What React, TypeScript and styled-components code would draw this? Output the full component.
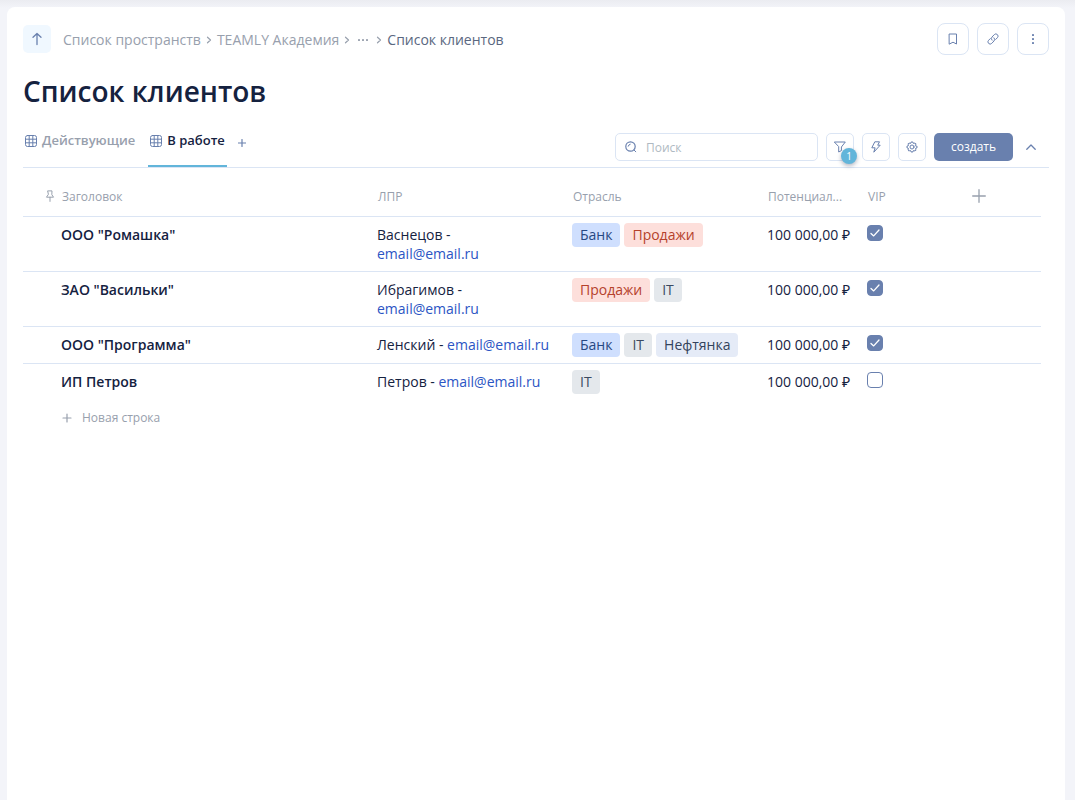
import React from "react";
import styled, { createGlobalStyle } from "styled-components";

const c = {
  ink: "#15223f",
  muted: "#98a0ad",
  accent: "#6980ae",
  sky: "#62b5da",
  line: "#dbe5f4",
  link: "#2b55c4",
};

const GlobalStyle = createGlobalStyle`
  *, *::before, *::after { box-sizing: border-box; }
  body {
    margin: 0;
    background: #f3f4f9;
    color: ${c.ink};
    font: 14px/19px "Open Sans", "Noto Sans", sans-serif;
  }
  button, input { font: inherit; color: inherit; }
  button { padding: 0; border: 0; background: none; cursor: pointer; }
  a { color: inherit; text-decoration: none; }
  svg { display: block; flex: none; }
`;

const Page = styled.div`
  display: flex;
  min-height: 100vh;
  padding: 7px 10px 0 7px;
  background: linear-gradient(#ebecf1, #f3f4f9 8px);
`;

const Panel = styled.main`
  flex: 1;
  min-width: 0;
  padding: 16px;
  background: #fff;
  border-radius: 8px 8px 0 0;
`;

const TopBar = styled.header`
  display: flex;
  align-items: center;
  gap: 12px;
  height: 32px;
`;

const BackLink = styled.a`
  display: grid;
  place-items: center;
  width: 28px;
  height: 28px;
  border-radius: 5px;
  background: #f0f8ff;
  color: ${c.accent};
`;

const Crumbs = styled.nav`
  display: flex;
  align-items: center;
  gap: 5px;
  flex: 1;
  color: ${c.muted};
  svg { margin-top: 2px; }
`;

const Current = styled.span`
  color: #5a6780;
`;

const More = styled.button`
  display: grid;
  place-items: center;
  width: 16px;
  height: 16px;
`;

const Actions = styled.div`
  display: flex;
  gap: 8px;
`;

const IconButton = styled.button<{ $size: number }>`
  position: relative;
  display: grid;
  place-items: center;
  flex: none;
  width: ${(p) => p.$size}px;
  height: ${(p) => p.$size}px;
  border: 1px solid ${c.line};
  border-radius: ${(p) => (p.$size > 30 ? 8 : 5)}px;
  background: #fff;
  color: ${c.accent};
`;

const Badge = styled.span`
  position: absolute;
  right: -4px;
  bottom: -4px;
  width: 16px;
  height: 16px;
  border-radius: 50%;
  background: ${c.sky};
  box-shadow: 0 2px 4px rgba(40, 50, 80, 0.35);
  color: #fff;
  font-size: 10px;
  line-height: 16px;
  text-align: center;
`;

const Title = styled.h1`
  margin: 16px 0 0;
  font-size: 28px;
  line-height: 40px;
  font-weight: 600;
`;

const Toolbar = styled.div`
  display: flex;
  align-items: flex-start;
  justify-content: space-between;
  height: 57px;
  border-bottom: 1px solid ${c.line};
`;

const Tabs = styled.div`
  display: flex;
  align-self: stretch;
  gap: 11px;
`;

const Tab = styled.button<{ $active?: boolean }>`
  display: flex;
  align-items: center;
  gap: 5px;
  padding: 5px 2px 0;
  border-bottom: 2px solid ${(p) => (p.$active ? c.sky : "transparent")};
  color: ${(p) => (p.$active ? c.ink : c.muted)};
  font-size: 13px;
  font-weight: 600;
  svg { color: ${c.accent}; }
`;

const AddTab = styled.button`
  display: grid;
  place-items: center;
  padding-top: 8px;
  color: ${c.accent};
`;

const Tools = styled.div`
  display: flex;
  align-items: center;
  gap: 8px;
  padding: 22px 8px 0 0;
`;

const Search = styled.label`
  display: flex;
  align-items: center;
  gap: 8px;
  width: 203px;
  height: 28px;
  padding: 0 8px;
  border: 1px solid ${c.line};
  border-radius: 5px;
  color: ${c.accent};
`;

const SearchInput = styled.input`
  flex: 1;
  min-width: 0;
  padding: 0;
  border: 0;
  outline: 0;
  background: none;
  font-size: 12px;
  &::placeholder { color: #afb9c2; opacity: 1; }
`;

const Create = styled.button`
  width: 79px;
  height: 28px;
  padding-bottom: 2px;
  border-radius: 5px;
  background: ${c.accent};
  color: #fff;
  font-size: 12px;
  font-weight: 500;
`;

const Collapse = styled.button`
  display: grid;
  place-items: center;
  width: 20px;
  height: 28px;
  color: ${c.accent};
`;

const TableWrap = styled.div`
  padding-right: 8px;
`;

const Table = styled.table`
  width: 100%;
  border-spacing: 0;
  table-layout: fixed;
`;

const HeadCell = styled.th`
  height: 49px;
  padding: 8px 8px 0 9px;
  border-bottom: 1px solid ${c.line};
  color: ${c.muted};
  font-size: 12px;
  font-weight: 400;
  text-align: left;
  white-space: nowrap;
`;

const NameHead = styled.span`
  display: flex;
  align-items: center;
  gap: 6px;
  padding-left: 12px;
`;

const AddColumn = styled.button`
  display: block;
  width: 14px;
  margin-left: 44px;
  color: ${c.muted};
`;

const Row = styled.tr`
  &:not(:last-child) td { border-bottom: 1px solid ${c.line}; }
`;

const Cell = styled.td`
  padding: 8px;
  vertical-align: top;
`;

const NameCell = styled(Cell)`
  padding-left: 38px;
  font-weight: 600;
`;

const TagCell = styled(Cell)`
  padding: 6px 8px;
`;

const Tags = styled.div`
  display: flex;
  gap: 4px;
`;

const tones = {
  blue: ["#cfdffe", "#274882"],
  red: ["#fddfdb", "#b5412b"],
  gray: ["#e4e8ec", "#3b4a61"],
  pale: ["#e5ebf7", "#33435c"],
};

const Tag = styled.span<{ $tone: keyof typeof tones }>`
  padding: 0 8px;
  border-radius: 4px;
  line-height: 24px;
  background: ${(p) => tones[p.$tone][0]};
  color: ${(p) => tones[p.$tone][1]};
`;

const Mail = styled.a`
  color: ${c.link};
`;

const Check = styled.input`
  display: block;
  appearance: none;
  width: 16px;
  height: 16px;
  margin: 0;
  border: 1px solid ${c.accent};
  border-radius: 4px;
  background: #fff;
`;

const CheckBox = styled.label`
  display: grid;
  width: 16px;
  > * { grid-area: 1 / 1; }
  svg { display: none; color: #fff; z-index: 1; pointer-events: none; }
  input:checked { background: ${c.accent}; }
  input:checked + svg { display: block; }
`;

const NewRow = styled.button`
  display: flex;
  align-items: center;
  gap: 10px;
  margin: 8px 0 0 39px;
  color: ${c.muted};
  font-size: 12px;
`;

type IconProps = { w: number; h?: number; d: string; sw?: number };
const Icon = ({ w, h = w, d, sw = 1 }: IconProps) => (
  <svg width={w} height={h} viewBox={`0 0 ${w} ${h}`} fill="none" stroke="currentColor"
    strokeWidth={sw} strokeLinecap="round" strokeLinejoin="round" aria-hidden="true">
    <path d={d} />
  </svg>
);

const GridIcon = () => (
  <Icon w={12} d="M2.5.5h7a2 2 0 0 1 2 2v7a2 2 0 0 1-2 2h-7a2 2 0 0 1-2-2v-7a2 2 0 0 1 2-2zM4.2.5v11M7.8.5v11M.5 4.2h11M.5 7.8h11" />
);
const Chevron = () => <Icon w={6} h={8} sw={1.2} d="M1.5 1.2 4.5 4 1.5 6.8" />;
const Dots = ({ vertical }: { vertical?: boolean }) => (
  <svg width="12" height="12" viewBox="0 0 12 12" fill="currentColor" aria-hidden="true">
    {[1, 5, 9].map((p) => (
      <rect key={p} x={vertical ? 5 : p} y={vertical ? p : 5} width="2" height="2" rx=".4" />
    ))}
  </svg>
);

const gearTeeth = Array.from({ length: 8 }, (_, i) => {
  const at = (r: number, deg: number) => {
    const a = ((i * 45 + deg) * Math.PI) / 180;
    return `${(6 + r * Math.cos(a)).toFixed(2)} ${(6 + r * Math.sin(a)).toFixed(2)}`;
  };
  return `${at(4.1, -14)}L${at(5.1, -9)}L${at(5.1, 9)}L${at(4.1, 14)}`;
});
const gear = `M${gearTeeth.join("L")}ZM8 6a2 2 0 1 1-4 0 2 2 0 0 1 4 0z`;

type TagData = [string, keyof typeof tones];
const bank: TagData = ["Банк", "blue"];
const sales: TagData = ["Продажи", "red"];
const it: TagData = ["IT", "gray"];
const oil: TagData = ["Нефтянка", "pale"];

const clients = [
  { name: 'ООО "Ромашка"', person: "Васнецов", tags: [bank, sales], vip: true },
  { name: 'ЗАО "Васильки"', person: "Ибрагимов", tags: [sales, it], vip: true },
  { name: 'ООО "Программа"', person: "Ленский", tags: [bank, it, oil], vip: true },
  { name: "ИП Петров", person: "Петров", tags: [it], vip: false },
];

export default function App() {
  return (
    <Page>
      <GlobalStyle />
      <Panel>
        <TopBar>
          <BackLink href="#" aria-label="Наверх">
            <Icon w={12} h={14} sw={1.3} d="M6 12.5V1.5M2 5.3 6 1.5l4 3.8" />
          </BackLink>
          <Crumbs>
            <a href="#">Список пространств</a>
            <Chevron />
            <a href="#">TEAMLY Академия</a>
            <Chevron />
            <More aria-label="Ещё"><Dots /></More>
            <Chevron />
            <Current>Список клиентов</Current>
          </Crumbs>
          <Actions>
            <IconButton $size={32} aria-label="В закладки">
              <Icon w={10} h={12} d="M1.5 1h7v10L5 9.2 1.5 11z" />
            </IconButton>
            <IconButton $size={32} aria-label="Ссылка">
              <Icon w={12} d="M5 7.2a2.3 2.3 0 0 1 0-3.2L7.3 1.6a2.1 2.1 0 0 1 3.1 3.1L8.7 6.4M7 4.8a2.3 2.3 0 0 1 0 3.2l-2.3 2.4a2.1 2.1 0 0 1-3.1-3.1l1.7-1.7" />
            </IconButton>
            <IconButton $size={32} aria-label="Меню"><Dots vertical /></IconButton>
          </Actions>
        </TopBar>
        <Title>Список клиентов</Title>
        <Toolbar>
          <Tabs>
            <Tab><GridIcon />Действующие</Tab>
            <Tab $active><GridIcon />В работе</Tab>
            <AddTab aria-label="Добавить вид"><Icon w={8} sw={1.2} d="M4 .5v7M.5 4h7" /></AddTab>
          </Tabs>
          <Tools>
            <Search>
              <svg width="14" height="14" viewBox="0 0 14 14" fill="none" stroke="currentColor" strokeLinecap="round" aria-hidden="true">
                <circle cx="6.5" cy="6.5" r="4.7" strokeWidth="1.2" />
                <path d="m10.2 10.2 1.6 1.6M4.2 6.2a2.6 2.6 0 0 1 2-2" />
              </svg>
              <SearchInput type="text" placeholder="Поиск" aria-label="Поиск" />
            </Search>
            <IconButton $size={28} aria-label="Фильтр">
              <Icon w={12} d="M.7 1h10.6L7.4 6v3.6L4.7 11V6z" />
              <Badge>1</Badge>
            </IconButton>
            <IconButton $size={28} aria-label="Автоматизация">
              <Icon w={10} h={12} d="M4.2.8h4.3L6.7 4.2h2.5L2.8 11.2l1.3-4.4H1.2z" />
            </IconButton>
            <IconButton $size={28} aria-label="Настройки"><Icon w={12} d={gear} /></IconButton>
            <Create>создать</Create>
            <Collapse aria-label="Свернуть"><Icon w={10} h={6} sw={1.3} d="M.8 5.2 5 1l4.2 4.2" /></Collapse>
          </Tools>
        </Toolbar>
        <TableWrap>
          <Table>
            <colgroup>
              <col style={{ width: 346 }} />
              <col style={{ width: 195 }} />
              <col style={{ width: 195 }} />
              <col style={{ width: 100 }} />
              <col style={{ width: 60 }} />
              <col />
            </colgroup>
            <thead>
              <tr>
                <HeadCell>
                  <NameHead>
                    <Icon w={12} d="M4 .9h4L7.8 4.6l1.7 2.6h-7l1.7-2.6zM6 7.2v4.2" />
                    Заголовок
                  </NameHead>
                </HeadCell>
                <HeadCell>ЛПР</HeadCell>
                <HeadCell>Отрасль</HeadCell>
                <HeadCell>Потенциал...</HeadCell>
                <HeadCell>VIP</HeadCell>
                <HeadCell>
                  <AddColumn aria-label="Добавить столбец"><Icon w={14} sw={1.3} d="M7 .7v12.6M.7 7h12.6" /></AddColumn>
                </HeadCell>
              </tr>
            </thead>
            <tbody>
              {clients.map((row) => (
                <Row key={row.name}>
                  <NameCell>{row.name}</NameCell>
                  <Cell>{row.person} - <Mail href="mailto:email@email.ru">email@email.ru</Mail></Cell>
                  <TagCell>
                    <Tags>{row.tags.map(([text, tone]) => <Tag key={text} $tone={tone}>{text}</Tag>)}</Tags>
                  </TagCell>
                  <Cell>100 000,00 ₽</Cell>
                  <Cell>
                    <CheckBox>
                      <Check type="checkbox" defaultChecked={row.vip} aria-label={`VIP: ${row.name}`} />
                      <Icon w={16} sw={1.3} d="m4 8.4 2.7 2.5L12 5" />
                    </CheckBox>
                  </Cell>
                  <Cell />
                </Row>
              ))}
            </tbody>
          </Table>
          <NewRow><Icon w={10} sw={1.2} d="M5 1v8M1 5h8" />Новая строка</NewRow>
        </TableWrap>
      </Panel>
    </Page>
  );
}
